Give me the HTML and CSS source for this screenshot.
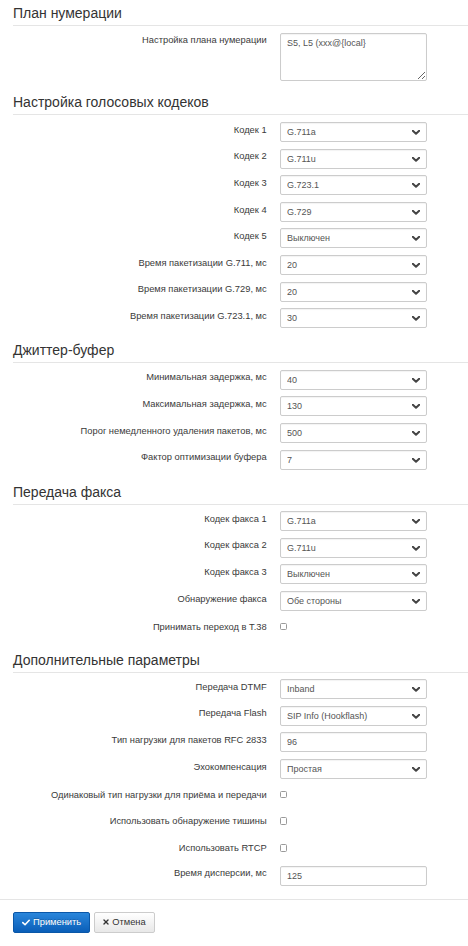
FILE: index.html
```html
<!DOCTYPE html>
<html lang="ru">
<head>
<meta charset="utf-8">
<title>Настройки</title>
<link rel="stylesheet" href="styles.css">
</head>
<body>
<div class="page">
  <section class="sec">
    <h2 class="legend">План нумерации</h2>
    <div class="row"><label class="lbl">Настройка плана нумерации</label><textarea class="ctl ta">S5, L5 (xxx@{local}</textarea></div>
  </section>

  <section class="sec">
    <h2 class="legend">Настройка голосовых кодеков</h2>
    <div class="row"><label class="lbl">Кодек 1</label><div class="sel"><select class="ctl"><option>G.711a</option></select><svg class="chev" viewBox="0 0 8 5"><path d="M0.8 0.8 L4 3.8 L7.2 0.8"/></svg></div></div>
    <div class="row"><label class="lbl">Кодек 2</label><div class="sel"><select class="ctl"><option>G.711u</option></select><svg class="chev" viewBox="0 0 8 5"><path d="M0.8 0.8 L4 3.8 L7.2 0.8"/></svg></div></div>
    <div class="row"><label class="lbl">Кодек 3</label><div class="sel"><select class="ctl"><option>G.723.1</option></select><svg class="chev" viewBox="0 0 8 5"><path d="M0.8 0.8 L4 3.8 L7.2 0.8"/></svg></div></div>
    <div class="row"><label class="lbl">Кодек 4</label><div class="sel"><select class="ctl"><option>G.729</option></select><svg class="chev" viewBox="0 0 8 5"><path d="M0.8 0.8 L4 3.8 L7.2 0.8"/></svg></div></div>
    <div class="row"><label class="lbl">Кодек 5</label><div class="sel"><select class="ctl"><option>Выключен</option></select><svg class="chev" viewBox="0 0 8 5"><path d="M0.8 0.8 L4 3.8 L7.2 0.8"/></svg></div></div>
    <div class="row"><label class="lbl">Время пакетизации G.711, мс</label><div class="sel"><select class="ctl"><option>20</option></select><svg class="chev" viewBox="0 0 8 5"><path d="M0.8 0.8 L4 3.8 L7.2 0.8"/></svg></div></div>
    <div class="row"><label class="lbl">Время пакетизации G.729, мс</label><div class="sel"><select class="ctl"><option>20</option></select><svg class="chev" viewBox="0 0 8 5"><path d="M0.8 0.8 L4 3.8 L7.2 0.8"/></svg></div></div>
    <div class="row"><label class="lbl">Время пакетизации G.723.1, мс</label><div class="sel"><select class="ctl"><option>30</option></select><svg class="chev" viewBox="0 0 8 5"><path d="M0.8 0.8 L4 3.8 L7.2 0.8"/></svg></div></div>
  </section>

  <section class="sec">
    <h2 class="legend">Джиттер-буфер</h2>
    <div class="row"><label class="lbl">Минимальная задержка, мс</label><div class="sel"><select class="ctl"><option>40</option></select><svg class="chev" viewBox="0 0 8 5"><path d="M0.8 0.8 L4 3.8 L7.2 0.8"/></svg></div></div>
    <div class="row"><label class="lbl">Максимальная задержка, мс</label><div class="sel"><select class="ctl"><option>130</option></select><svg class="chev" viewBox="0 0 8 5"><path d="M0.8 0.8 L4 3.8 L7.2 0.8"/></svg></div></div>
    <div class="row"><label class="lbl">Порог немедленного удаления пакетов, мс</label><div class="sel"><select class="ctl"><option>500</option></select><svg class="chev" viewBox="0 0 8 5"><path d="M0.8 0.8 L4 3.8 L7.2 0.8"/></svg></div></div>
    <div class="row"><label class="lbl">Фактор оптимизации буфера</label><div class="sel"><select class="ctl"><option>7</option></select><svg class="chev" viewBox="0 0 8 5"><path d="M0.8 0.8 L4 3.8 L7.2 0.8"/></svg></div></div>
  </section>

  <section class="sec">
    <h2 class="legend">Передача факса</h2>
    <div class="row"><label class="lbl">Кодек факса 1</label><div class="sel"><select class="ctl"><option>G.711a</option></select><svg class="chev" viewBox="0 0 8 5"><path d="M0.8 0.8 L4 3.8 L7.2 0.8"/></svg></div></div>
    <div class="row"><label class="lbl">Кодек факса 2</label><div class="sel"><select class="ctl"><option>G.711u</option></select><svg class="chev" viewBox="0 0 8 5"><path d="M0.8 0.8 L4 3.8 L7.2 0.8"/></svg></div></div>
    <div class="row"><label class="lbl">Кодек факса 3</label><div class="sel"><select class="ctl"><option>Выключен</option></select><svg class="chev" viewBox="0 0 8 5"><path d="M0.8 0.8 L4 3.8 L7.2 0.8"/></svg></div></div>
    <div class="row"><label class="lbl">Обнаружение факса</label><div class="sel"><select class="ctl"><option>Обе стороны</option></select><svg class="chev" viewBox="0 0 8 5"><path d="M0.8 0.8 L4 3.8 L7.2 0.8"/></svg></div></div>
    <div class="row chk"><label class="lbl">Принимать переход в T.38</label><div class="cbwrap"><input type="checkbox" class="cb"></div></div>
  </section>

  <section class="sec">
    <h2 class="legend">Дополнительные параметры</h2>
    <div class="row"><label class="lbl">Передача DTMF</label><div class="sel"><select class="ctl"><option>Inband</option></select><svg class="chev" viewBox="0 0 8 5"><path d="M0.8 0.8 L4 3.8 L7.2 0.8"/></svg></div></div>
    <div class="row"><label class="lbl">Передача Flash</label><div class="sel"><select class="ctl"><option>SIP Info (Hookflash)</option></select><svg class="chev" viewBox="0 0 8 5"><path d="M0.8 0.8 L4 3.8 L7.2 0.8"/></svg></div></div>
    <div class="row"><label class="lbl">Тип нагрузки для пакетов RFC 2833</label><input class="ctl" type="text" value="96"></div>
    <div class="row"><label class="lbl">Эхокомпенсация</label><div class="sel"><select class="ctl"><option>Простая</option></select><svg class="chev" viewBox="0 0 8 5"><path d="M0.8 0.8 L4 3.8 L7.2 0.8"/></svg></div></div>
    <div class="row chk"><label class="lbl">Одинаковый тип нагрузки для приёма и передачи</label><div class="cbwrap"><input type="checkbox" class="cb"></div></div>
    <div class="row chk"><label class="lbl">Использовать обнаружение тишины</label><div class="cbwrap"><input type="checkbox" class="cb"></div></div>
    <div class="row chk"><label class="lbl">Использовать RTCP</label><div class="cbwrap"><input type="checkbox" class="cb"></div></div>
    <div class="row"><label class="lbl">Время дисперсии, мс</label><input class="ctl" type="text" value="125"></div>
  </section>
</div>

<div class="actions">
  <button class="btn primary" type="button"><svg class="ico" viewBox="0 0 10 8"><path d="M1 4.2 L3.8 6.8 L9 1.2"/></svg>Применить</button>
  <button class="btn default" type="button"><svg class="ico x" viewBox="0 0 8 8"><path d="M1.3 1.3 L6.7 6.7 M6.7 1.3 L1.3 6.7"/></svg>Отмена</button>
</div>
</body>
</html>
```

FILE: styles.css
```css
* { box-sizing: border-box; }

html, body {
  margin: 0;
  padding: 0;
  background: #fff;
}

body {
  font-family: "Liberation Sans", Arial, sans-serif;
  font-size: 9.33px;
  color: #333;
}

.page {
  padding-left: 13px;
}

.legend {
  margin: 0 0 6.5px;
  padding: 7.2px 0 4px;
  font-size: 14px;
  line-height: 16px;
  font-weight: normal;
  color: #333;
  border-bottom: 1px solid #e5e5e5;
}

.sec:first-child .legend {
  padding-top: 5px;
}

.row {
  display: grid;
  grid-template-columns: 253.67px 147px;
  column-gap: 13.33px;
  align-items: start;
  margin-bottom: 6.67px;
}

.lbl {
  text-align: right;
  line-height: 13.33px;
  padding-top: 1.7px;
  color: #3a3a3a;
}

.chk .lbl {
  padding-top: 3px;
}

.ctl {
  display: block;
  width: 100%;
  height: 20px;
  margin: 0;
  padding: 0 6px;
  border: 1px solid #ccc;
  border-radius: 2px;
  background: #fff;
  font-family: "Liberation Sans", Arial, sans-serif;
  font-size: 9px;
  color: #555;
  box-shadow: inset 0 1px 1px rgba(0, 0, 0, 0.05);
  outline: none;
}

.ta {
  height: 48px;
  padding: 3px 6px;
  line-height: 12px;
}

.sel {
  position: relative;
}

.sel select {
  -webkit-appearance: none;
  appearance: none;
  padding-right: 20px;
}

.chev {
  position: absolute;
  right: 7px;
  top: 8px;
  width: 8px;
  height: 5px;
  fill: none;
  stroke: #444;
  stroke-width: 2;
  stroke-linecap: round;
  stroke-linejoin: round;
  pointer-events: none;
}

.cbwrap {
  height: 20px;
  padding-top: 5px;
}

.cb {
  -webkit-appearance: none;
  appearance: none;
  display: block;
  width: 7.5px;
  height: 7.5px;
  margin: 0;
  border: 1px solid #9a9a9a;
  border-radius: 1.5px;
  background: #fff;
}

.actions {
  margin-top: 13px;
  border-top: 1px solid #e5e5e5;
  padding: 12px 13px 0;
  display: flex;
  gap: 4px;
}

.btn {
  display: inline-flex;
  align-items: center;
  gap: 3px;
  height: 21px;
  padding: 0 8px;
  border-radius: 2px;
  font-family: "Liberation Sans", Arial, sans-serif;
  font-size: 9.33px;
  cursor: pointer;
}

.primary {
  color: #fff;
  background: linear-gradient(#2a86db, #0a5eb8);
  border: 1px solid #0a57a8;
  text-shadow: 0 -1px 0 rgba(0, 0, 0, 0.2);
}

.default {
  color: #333;
  background: linear-gradient(#fff, #e8e8e8);
  border: 1px solid #ccc;
}

.ico {
  width: 8px;
  height: 7px;
  fill: none;
  stroke: #fff;
  stroke-width: 2;
  stroke-linecap: round;
  stroke-linejoin: round;
}

.ico.x {
  width: 6px;
  height: 6px;
  stroke: #333;
  stroke-width: 1.8;
}
```
